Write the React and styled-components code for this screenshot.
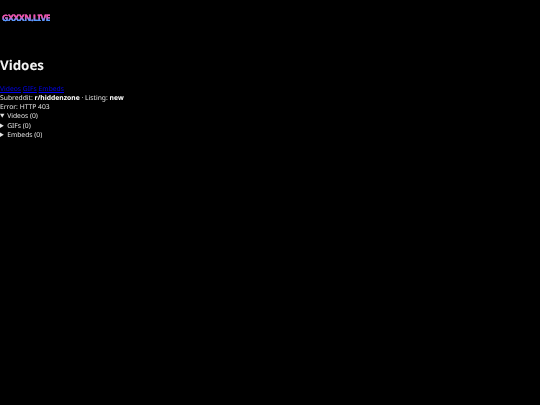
import React from 'react';
import styled, { createGlobalStyle } from 'styled-components';

const GlobalStyle = createGlobalStyle`
  html, body { margin: 0; background: #000; }
  body { font-family: "Noto Sans", sans-serif; color: #e0e0e0; text-rendering: geometricPrecision; }
`;

const Page = styled.div`
  min-height: 405px;
  font-size: 6.75px;
  line-height: 9.3px;
  will-change: transform;
`;
const Header = styled.header`
  height: 34px;
  padding-top: 14px;
  box-sizing: border-box;
`;
const Logo = styled.a`
  display: inline-block;
  margin-left: 2px;
  font-size: 8.8px;
  line-height: 9px;
  letter-spacing: -0.45px;
  font-weight: 700;
  background: linear-gradient(180deg, #ff4fa0 30%, #4f9dff 68%);
  -webkit-background-clip: text;
  background-clip: text;
  color: transparent;
  -webkit-text-stroke: 0.2px transparent;
  filter: drop-shadow(0 0 0.4px rgba(190, 120, 255, 0.9));
`;
const Title = styled.h1`
  margin: 22px 0 9.6px;
  font-size: 13.33px;
  line-height: 18px;
  font-weight: 700;
  color: #f2f2f2;
`;
const NavLink = styled.a`
  color: #0000ee;
  text-decoration: underline;
`;
const Line = styled.div``;
const Strong = styled.b`
  font-weight: 700;
  color: #fff;
`;
const Section = styled.details`
  & > summary { cursor: pointer; }
`;

export default function App() {
  return (
    <Page>
      <GlobalStyle />
      <Header><Logo>GXXXN.LIVE</Logo></Header>
      <Title>Vidoes</Title>
      <Line><NavLink href="#">Videos</NavLink> <NavLink href="#">GIFs</NavLink> <NavLink href="#">Embeds</NavLink></Line>
      <Line>Subreddit: <Strong>r/hiddenzone</Strong> · Listing: <Strong>new</Strong></Line>
      <Line>Error: HTTP 403</Line>
      <Section open><summary>Videos (0)</summary></Section>
      <Section><summary>GIFs (0)</summary></Section>
      <Section><summary>Embeds (0)</summary></Section>
    </Page>
  );
}
